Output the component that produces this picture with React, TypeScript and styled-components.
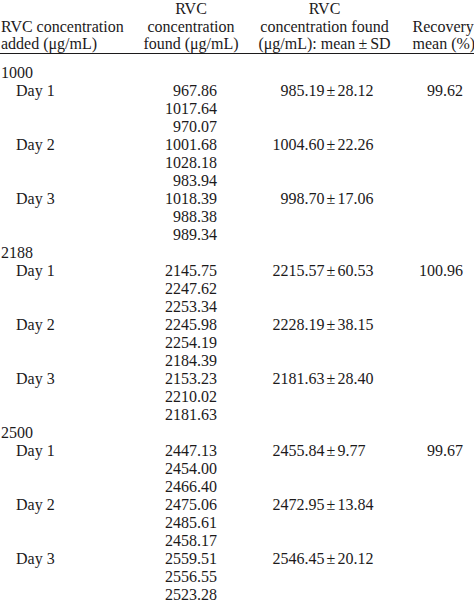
import React from "react";
import styled, { createGlobalStyle } from "styled-components";

const GlobalStyle = createGlobalStyle`
    html, body {
        margin: 0;
        padding: 0;
        background: #fff;
        overflow: hidden;
    }
`;

type Day = { values: string[]; mean: string; sd: string };
type Group = { added: string; recovery: string; days: Day[] };

const groups: Group[] = [
    {
        added: "1000",
        recovery: "99.62",
        days: [
            { values: ["967.86", "1017.64", "970.07"], mean: "985.19", sd: "28.12" },
            { values: ["1001.68", "1028.18", "983.94"], mean: "1004.60", sd: "22.26" },
            { values: ["1018.39", "988.38", "989.34"], mean: "998.70", sd: "17.06" },
        ],
    },
    {
        added: "2188",
        recovery: "100.96",
        days: [
            { values: ["2145.75", "2247.62", "2253.34"], mean: "2215.57", sd: "60.53" },
            { values: ["2245.98", "2254.19", "2184.39"], mean: "2228.19", sd: "38.15" },
            { values: ["2153.23", "2210.02", "2181.63"], mean: "2181.63", sd: "28.40" },
        ],
    },
    {
        added: "2500",
        recovery: "99.67",
        days: [
            { values: ["2447.13", "2454.00", "2466.40"], mean: "2455.84", sd: "9.77" },
            { values: ["2475.06", "2485.61", "2458.17"], mean: "2472.95", sd: "13.84" },
            { values: ["2559.51", "2556.55", "2523.28"], mean: "2546.45", sd: "20.12" },
        ],
    },
];

const Table = styled.div`
    width: 474px;
    height: 605px;
    overflow: hidden;
    font-family: "Liberation Serif", "Times New Roman", serif;
    font-size: 16px;
    color: #1c1a1b;
`;

const Header = styled.div`
    display: grid;
    grid-template-columns: 140px 102px 165px 1fr;
    align-items: end;
    line-height: 17.5px;
    border-bottom: 1.5px solid #1c1a1b;
`;

const HeadCell = styled.div<{ $align?: "left" | "center" }>`
    text-align: ${(p) => p.$align || "left"};
    white-space: nowrap;
    &.first {
        padding-left: 1px;
    }
    &.last {
        padding-left: 5.5px;
    }
`;

const Body = styled.div`
    padding-top: 10px;
`;

const Row = styled.div`
    display: grid;
    grid-template-columns: 140px 77px 107.5px 13px 61.5px 64px;
    height: 18px;
    line-height: 18px;
    white-space: nowrap;
`;

const Label = styled.div<{ $indent?: boolean }>`
    padding-left: ${(p) => (p.$indent ? "16px" : "1px")};
`;

const Num = styled.div`
    text-align: right;
`;

const Pm = styled.div`
    text-align: center;
`;

const Sd = styled.div`
    text-align: left;
`;

const PmInline = styled.span`
    margin: 0 3px;
`;

export default function App() {
    return (
        <>
            <GlobalStyle />
            <Table>
                <Header>
                    <HeadCell className="first">
                        RVC concentration
                        <br />
                        added (μg/mL)
                    </HeadCell>
                    <HeadCell $align="center">
                        RVC
                        <br />
                        concentration
                        <br />
                        found (μg/mL)
                    </HeadCell>
                    <HeadCell $align="center">
                        RVC
                        <br />
                        concentration found
                        <br />
                        (μg/mL): mean<PmInline>±</PmInline>SD
                    </HeadCell>
                    <HeadCell className="last">
                        Recovery
                        <br />
                        mean (%)
                    </HeadCell>
                </Header>
                <Body>
                    {groups.map((g) => (
                        <React.Fragment key={g.added}>
                            <Row>
                                <Label>{g.added}</Label>
                            </Row>
                            {g.days.map((d, i) => (
                                <React.Fragment key={i}>
                                    <Row>
                                        <Label $indent>Day {i + 1}</Label>
                                        <Num>{d.values[0]}</Num>
                                        <Num>{d.mean}</Num>
                                        <Pm>±</Pm>
                                        <Sd>{d.sd}</Sd>
                                        <Num>{i === 0 ? g.recovery : ""}</Num>
                                    </Row>
                                    {d.values.slice(1).map((v) => (
                                        <Row key={v}>
                                            <Label />
                                            <Num>{v}</Num>
                                        </Row>
                                    ))}
                                </React.Fragment>
                            ))}
                        </React.Fragment>
                    ))}
                </Body>
            </Table>
        </>
    );
}
